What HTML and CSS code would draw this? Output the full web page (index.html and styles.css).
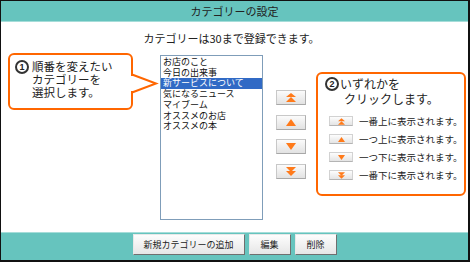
FILE: index.html
```html
<!DOCTYPE html>
<html>
  <head>
    <title>カテゴリーの設定</title>
    <link rel="stylesheet" href="styles.css">
  </head>
  <body>
    <div class="frame">
      <div class="title-bar">カテゴリーの設定</div>
      <div class="main">
        <p class="notice">カテゴリーは30まで登録できます。</p>
        <div class="editor">
          <div class="callout callout-select">
            <span class="step">1</span>
            <p class="callout-text">順番を変えたい<br>カテゴリーを<br>選択します。</p>
            <svg class="callout-arrow" width="28" height="22" viewBox="0 0 28 22">
              <polygon points="0,3 3,3 25,10.5 3,18 0,18" fill="#fff" />
              <polyline points="1,1.5 25,10.5 1,19.5" fill="none" stroke="#ff6600" stroke-width="2" />
            </svg>
          </div>

          <div class="cat-list">
            <div class="cat-item">お店のこと</div>
            <div class="cat-item">今日の出来事</div>
            <div class="cat-item selected">新サービスについて</div>
            <div class="cat-item">気になるニュース</div>
            <div class="cat-item">マイブーム</div>
            <div class="cat-item">オススメのお店</div>
            <div class="cat-item">オススメの本</div>
          </div>

          <div class="move-buttons">
            <button class="move-btn" title="一番上">
              <svg width="10" height="9" viewBox="0 0 10 9"><polygon points="5,0 10,4 0,4" fill="#ff7a1a" /><polygon points="5,4 10,9 0,9" fill="#ff7a1a" /></svg>
            </button>
            <button class="move-btn" title="一つ上">
              <svg width="10" height="7" viewBox="0 0 10 7"><polygon points="5,0 10,7 0,7" fill="#ff7a1a" /></svg>
            </button>
            <button class="move-btn" title="一つ下">
              <svg width="10" height="7" viewBox="0 0 10 7"><polygon points="0,0 10,0 5,7" fill="#ff7a1a" /></svg>
            </button>
            <button class="move-btn" title="一番下">
              <svg width="10" height="9" viewBox="0 0 10 9"><polygon points="0,0 10,0 5,5" fill="#ff7a1a" /><polygon points="0,4 10,4 5,9" fill="#ff7a1a" /></svg>
            </button>
          </div>

          <div class="callout callout-help">
            <div class="callout-head">
              <span class="step">2</span>
              <p class="callout-text">いずれかを<br><span class="indent">クリックします。</span></p>
            </div>
            <ul class="help-list">
              <li>
                <span class="mini-btn"><svg width="7" height="7" viewBox="0 0 10 9"><polygon points="5,0 10,4 0,4" fill="#ff7a1a" /><polygon points="5,4 10,9 0,9" fill="#ff7a1a" /></svg></span>
                一番上に表示されます。
              </li>
              <li>
                <span class="mini-btn"><svg width="7" height="5" viewBox="0 0 10 7"><polygon points="5,0 10,7 0,7" fill="#ff7a1a" /></svg></span>
                一つ上に表示されます。
              </li>
              <li>
                <span class="mini-btn"><svg width="7" height="5" viewBox="0 0 10 7"><polygon points="0,0 10,0 5,7" fill="#ff7a1a" /></svg></span>
                一つ下に表示されます。
              </li>
              <li>
                <span class="mini-btn"><svg width="7" height="7" viewBox="0 0 10 9"><polygon points="0,0 10,0 5,5" fill="#ff7a1a" /><polygon points="0,4 10,4 5,9" fill="#ff7a1a" /></svg></span>
                一番下に表示されます。
              </li>
            </ul>
          </div>
        </div>
      </div>
      <div class="footer">
        <button class="footer-btn wide">新規カテゴリーの追加</button>
        <button class="footer-btn">編集</button>
        <button class="footer-btn">削除</button>
      </div>
    </div>
  </body>
</html>
```

FILE: styles.css
```css
body {
  margin: 0;
  font-family: "Noto Sans CJK JP", "Liberation Sans", sans-serif;
  color: #222;
}
.frame {
  width: 470px;
  height: 262px;
  box-sizing: border-box;
  border-top: 1px solid #111;
  border-left: 1px solid #111;
  border-right: 2px solid #111;
  border-bottom: 2px solid #111;
  display: flex;
  flex-direction: column;
}
.title-bar {
  height: 20px;
  background: #66c4be;
  border-bottom: 1px solid #a6ddd9;
  text-align: center;
  font-size: 11px;
  line-height: 20px;
  color: #222;
}
.main {
  height: 210px;
  background: #fff;
}
.notice {
  margin: 8px 0 0;
  text-align: center;
  font-size: 11px;
  line-height: 16px;
  padding-right: 6px;
}
.editor {
  display: flex;
  align-items: flex-start;
  margin-top: 7px;
  padding-left: 7px;
}
.callout {
  position: relative;
  box-sizing: border-box;
  border: 2px solid #ff6600;
  border-radius: 6px;
  background: #fff;
}
.callout-select {
  width: 125px;
  height: 57px;
  display: flex;
  align-items: flex-start;
  padding: 5px 0 0 5px;
}
.callout-text {
  margin: 0;
  font-size: 11.5px;
  line-height: 13px;
}
.step {
  flex: none;
  box-sizing: border-box;
  width: 14px;
  height: 14px;
  border: 2px solid #333;
  border-radius: 50%;
  font-size: 9px;
  font-weight: bold;
  line-height: 10px;
  text-align: center;
  margin-right: 3px;
  font-family: "Liberation Sans", sans-serif;
}
.callout-arrow {
  position: absolute;
  left: 121px;
  top: 18px;
}
.cat-list {
  width: 103px;
  height: 165px;
  box-sizing: border-box;
  margin: 2px 0 0 27px;
  border: 1px solid #7f9db9;
  padding-top: 1px;
  font-size: 9px;
  line-height: 10.7px;
  color: #111;
}
.cat-item {
  padding-left: 2px;
  white-space: nowrap;
}
.cat-item.selected {
  background: #316ac5;
  color: #fff;
}
.move-buttons {
  display: flex;
  flex-direction: column;
  gap: 9.5px;
  margin: 37px 0 0 13px;
}
.move-btn {
  width: 30px;
  height: 15px;
  padding: 0;
  display: flex;
  align-items: center;
  justify-content: center;
  background: linear-gradient(#fbfbfb, #e2e2e2);
  border: 1px solid #c8c8c8;
  border-bottom-color: #a8a8a8;
  border-right-color: #b0b0b0;
}
.callout-help {
  width: 150px;
  height: 124px;
  margin: 19px 0 0 10px;
  padding: 2px 0 0 7px;
}
.callout-head {
  display: flex;
  align-items: flex-start;
}
.callout-head .step {
  margin-top: 1px;
  margin-right: 1px;
}
.callout-help .callout-text {
  font-size: 12px;
  line-height: 15px;
}
.indent {
  margin-left: 4px;
}
.help-list {
  list-style: none;
  margin: 6px 0 0;
  padding: 0 0 0 4px;
}
.help-list li {
  display: flex;
  align-items: center;
  gap: 6px;
  height: 18px;
  font-size: 9.5px;
  white-space: nowrap;
}
.mini-btn {
  width: 24px;
  height: 10px;
  box-sizing: border-box;
  display: flex;
  align-items: center;
  justify-content: center;
  background: linear-gradient(#fdfdfd, #e4e4e4);
  border: 1px solid #d2d2d2;
  border-bottom-color: #b4b4b4;
}
.footer {
  flex: 1;
  background: #66c4be;
  border-top: 1px solid #a6ddd9;
  display: flex;
  justify-content: center;
  align-items: flex-start;
  gap: 4px;
  padding-top: 1px;
}
.footer-btn {
  width: 42px;
  height: 21px;
  padding: 0;
  font-family: "Noto Sans CJK JP", sans-serif;
  font-size: 9px;
  color: #222;
  background: linear-gradient(#fdfdfd, #e6e6e6);
  border: 1px solid #e8e8e8;
  border-right-color: #6f6f6f;
  border-bottom-color: #6f6f6f;
}
.footer-btn.wide {
  width: 112px;
}
```
